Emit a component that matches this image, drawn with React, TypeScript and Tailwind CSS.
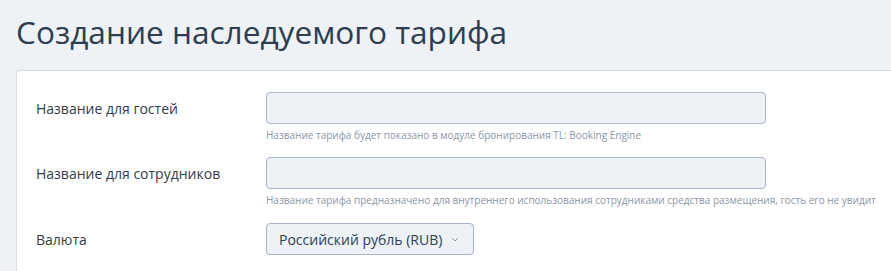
import React from "react";

export default function App() {
  return (
    <div className="min-h-[271px] w-[891px] overflow-hidden bg-[#eef1f5] pl-4 pt-2" style={{ fontFamily: '"Open Sans", sans-serif' }}>
      <h1 className="text-[31.6px] leading-[40px] font-normal text-[#2c3e50] h-[62px] pt-[4px]">
        Создание наследуемого тарифа
      </h1>
      <div className="bg-white border-l border-t border-[#d5dce6] rounded-tl-[4px] pl-[19px] pt-[21px] pb-4 w-[900px]">
        <div className="flex">
          <div className="w-[230px] text-[14px] text-[#333c48] pt-[6px]">Название для гостей</div>
          <div className="flex flex-col">
            <div className="w-[500px] h-[32px] bg-[#eef1f5] border border-[#a8b5c7] rounded-[4px]" />
            <div className="text-[10px] text-[#8a96a6] mt-[4px] leading-[14px]">
              Название тарифа будет показано в модуле бронирования TL: Booking Engine
            </div>
          </div>
        </div>
        <div className="flex mt-[15px]">
          <div className="w-[230px] text-[14px] text-[#333c48] pt-[6px]">Название для сотрудников</div>
          <div className="flex flex-col">
            <div className="w-[500px] h-[32px] bg-[#eef1f5] border border-[#a8b5c7] rounded-[4px]" />
            <div className="text-[10px] text-[#8a96a6] mt-[4px] leading-[14px] whitespace-nowrap">
              Название тарифа предназначено для внутреннего использования сотрудниками средства размещения, гость его не увидит
            </div>
          </div>
        </div>
        <div className="flex mt-[16px]">
          <div className="w-[230px] text-[14px] text-[#333c48] pt-[6px]">Валюта</div>
          <div className="w-[208px] h-[32px] bg-[#eef1f5] border border-[#a8b5c7] rounded-[4px] flex items-center pl-3 text-[14px] text-[#2c3e50]">
            <span>Российский рубль (RUB)</span>
            <svg className="ml-[9px]" width="8" height="5" viewBox="0 0 8 5" fill="none">
              <path d="M1 1l3 3 3-3" stroke="#8a96a6" strokeWidth="1" />
            </svg>
          </div>
        </div>
      </div>
    </div>
  );
}
